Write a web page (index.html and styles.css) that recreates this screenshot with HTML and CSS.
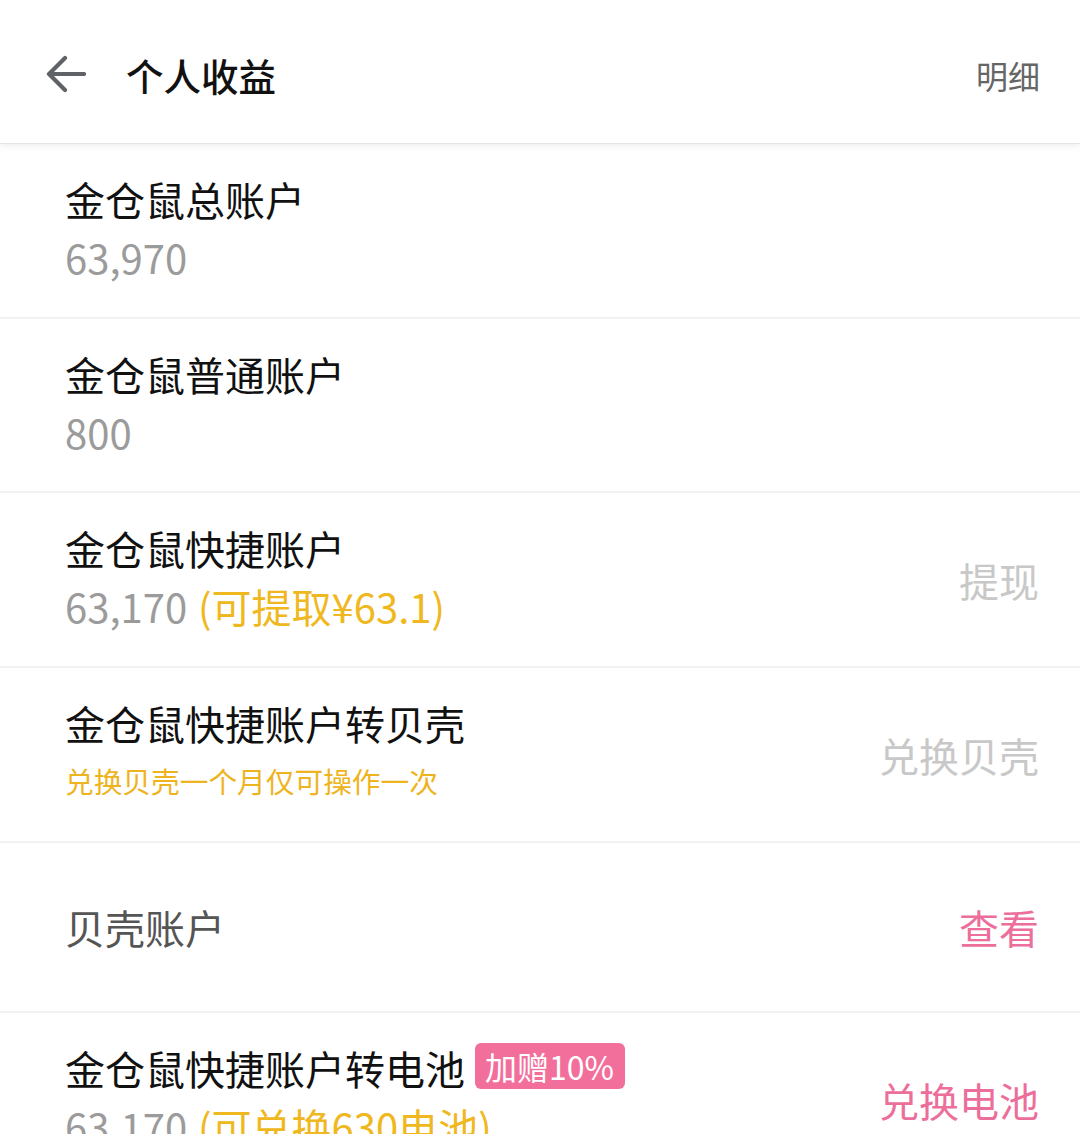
FILE: index.html
```html
<!DOCTYPE html>
<html lang="zh-CN">
<head>
<meta charset="utf-8">
<title>个人收益</title>
<link rel="stylesheet" href="styles.css">
</head>
<body>
<header class="topbar">
  <div class="topbar-left">
    <svg class="back" width="40" height="40" viewBox="0 0 40 40" aria-hidden="true">
      <path d="M38 19H4M19 3L3 19l16 16" fill="none" stroke="#5f6266" stroke-width="4.2" stroke-linecap="round" stroke-linejoin="round"/>
    </svg>
    <h1 class="title">个人收益</h1>
  </div>
  <span class="detail">明细</span>
</header>

<main class="list">
  <section class="row">
    <div class="info">
      <div class="name">金仓鼠总账户</div>
      <div class="amount">63,970</div>
    </div>
  </section>

  <section class="row row-second">
    <div class="info">
      <div class="name">金仓鼠普通账户</div>
      <div class="amount">800</div>
    </div>
  </section>

  <section class="row">
    <div class="info">
      <div class="name">金仓鼠快捷账户</div>
      <div class="amount">63,170 <span class="hint">(可提取¥63.1)</span></div>
    </div>
    <span class="action action-muted">提现</span>
  </section>

  <section class="row">
    <div class="info">
      <div class="name">金仓鼠快捷账户转贝壳</div>
      <div class="note">兑换贝壳一个月仅可操作一次</div>
    </div>
    <span class="action action-muted">兑换贝壳</span>
  </section>

  <section class="row row-single">
    <div class="info">
      <div class="name name-soft">贝壳账户</div>
    </div>
    <span class="action action-pink">查看</span>
  </section>

  <section class="row">
    <div class="info">
      <div class="name name-badge">金仓鼠快捷账户转电池<span class="badge">加赠10%</span></div>
      <div class="amount">63,170 <span class="hint">(可兑换630电池)</span></div>
    </div>
    <span class="action action-pink">兑换电池</span>
  </section>
</main>
</body>
</html>
```
FILE: styles.css
```css
html, body {
  margin: 0;
  padding: 0;
  background: #ffffff;
}

body {
  font-family: "Noto Sans CJK SC", "Noto Sans", sans-serif;
  color: #111111;
}

.topbar {
  position: relative;
  z-index: 1;
  box-sizing: border-box;
  height: 144px;
  padding: 6px 40px 0 46px;
  display: flex;
  align-items: center;
  justify-content: space-between;
  background: #ffffff;
  border-bottom: 1px solid #e4e4e4;
  box-shadow: 0 2px 6px rgba(0, 0, 0, 0.07);
}

.topbar-left {
  display: flex;
  align-items: center;
  gap: 40px;
}

.back {
  display: block;
}

.title {
  margin: 0;
  font-size: 37.5px;
  font-weight: 500;
  line-height: 50px;
  color: #111111;
}

.detail {
  font-size: 32px;
  line-height: 44px;
  color: #666666;
}

.list {
  display: flex;
  flex-direction: column;
}

.row {
  height: 173px;
  padding: 0 41px 0 65px;
  display: flex;
  align-items: center;
  justify-content: space-between;
  border-bottom: 2px solid #f2f2f2;
}

.row-second {
  height: 172px;
}

.row-single {
  height: 168px;
}

.info {
  align-self: flex-start;
  padding-top: 26px;
  display: flex;
  flex-direction: column;
}

.row-single .info {
  align-self: center;
  padding-top: 0;
}

.name {
  font-size: 40px;
  line-height: 58px;
  color: #111111;
}

.name-soft {
  color: #555555;
}

.name-badge {
  display: flex;
  align-items: center;
  gap: 10px;
}

.badge {
  display: inline-flex;
  align-items: center;
  height: 46px;
  padding: 0 11px 0 10px;
  margin-top: -4px;
  border-radius: 6px;
  background: #f26f9b;
  color: #ffffff;
  font-size: 32px;
  line-height: 46px;
}

.amount {
  font-size: 40px;
  line-height: 58px;
  color: #9b9b9b;
}

.hint {
  color: #f0b820;
  margin-left: 2px;
}

.note {
  font-size: 28.7px;
  line-height: 58px;
  color: #eeb420;
}

.action {
  font-size: 40px;
  line-height: 56px;
}

.action-muted {
  color: #c8c8c8;
}

.action-pink {
  color: #ec6f9b;
}
```
